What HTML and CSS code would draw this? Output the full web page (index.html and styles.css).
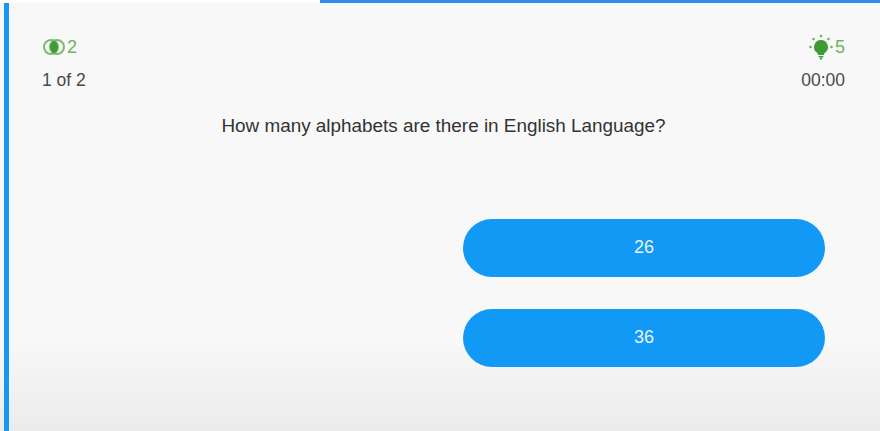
FILE: index.html
```html
<!DOCTYPE html>
<html>
  <head>
    <title>Quiz</title>
    <link rel="stylesheet" href="styles.css">
  </head>
  <body>
    <div class="progress"><div class="progress__bar"></div></div>
    <div class="quiz">
      <div class="stats">
        <div class="stats__col">
          <div class="stat">
            <svg class="stat__icon" width="24" height="16" viewBox="0 0 24 16">
              <circle cx="9" cy="8" r="7" fill="none" stroke="#7cbb6c" stroke-width="2"/>
              <circle cx="15" cy="8" r="7" fill="none" stroke="#7cbb6c" stroke-width="2"/>
              <path d="M12 1.700a7 7 0 0 1 0 12.600a7 7 0 0 1 0-12.600z" fill="#3f9c35"/>
            </svg>
            <span>2</span>
          </div>
          <div class="stats__text">1 of 2</div>
        </div>
        <div class="stats__col stats__col--right">
          <div class="stat">
            <svg class="stat__icon stat__icon--bulb" width="24" height="26" viewBox="0 0 24 26">
              <path d="M12 6a7 7 0 0 1 4.300 12.500c-.8.700-1.300 1.300-1.400 2.500H9.100c-.1-1.200-.6-1.800-1.400-2.500A7 7 0 0 1 12 6z" fill="#3f9c35"/>
              <path d="M9.500 22h5l-.5 1.500h-4zM10.500 24h3l-.8 1.500h-1.400z" fill="#3f9c35"/>
              <g fill="#6fb35f">
                <circle cx="12" cy="2" r="1.300"/>
                <circle cx="4.500" cy="5" r="1.300"/>
                <circle cx="19.500" cy="5" r="1.300"/>
                <circle cx="1.500" cy="13" r="1.300"/>
                <circle cx="22.500" cy="13" r="1.300"/>
              </g>
            </svg>
            <span>5</span>
          </div>
          <div class="stats__text">00:00</div>
        </div>
      </div>
      <p class="question">How many alphabets are there in English Language?</p>
      <div class="answers">
        <button class="answer">26</button>
        <button class="answer">36</button>
      </div>
    </div>
  </body>
</html>
```

FILE: styles.css
```css
/* Page */
html,
body {
  height: 100%;
}

body {
  margin: 0;
  overflow: hidden;
  display: flex;
  flex-direction: column;
  font-family: "Liberation Sans", Arial, sans-serif;
  background: linear-gradient(#f8f8f8 0, #f8f8f8 340px, #ebebeb 431px);
}

/* Top progress */
.progress {
  height: 3px;
  flex-shrink: 0;
  display: flex;
  justify-content: flex-end;
  background-color: #ffffff;
}

.progress__bar {
  width: 560px;
  background-color: #2f8fe8;
}

/* Card */
.quiz {
  height: 419px;
  margin-left: 4px;
  padding: 32px 35px 0 33px;
  border-left: 5px solid #1797ef;
}

.stats {
  display: flex;
  justify-content: space-between;
  color: #4a4a4a;
}

.stats__col {
  display: flex;
  flex-direction: column;
  gap: 11px;
}

.stats__col--right {
  align-items: flex-end;
}

.stat {
  height: 24px;
  display: flex;
  align-items: center;
  gap: 1px;
  font-size: 18px;
  color: #6fb35f;
}

.stat__icon--bulb {
  margin-right: 1px;
}

.stats__text {
  font-size: 17.5px;
  line-height: 20px;
}

/* Question */
.question {
  margin: 25px 0 0;
  font-size: 18.9px;
  line-height: 22px;
  text-align: center;
  color: #333333;
}

/* Answers */
.answers {
  width: 362px;
  margin: 82px 0 0 421px;
  display: flex;
  flex-direction: column;
  gap: 32px;
}

.answer {
  height: 58px;
  padding: 0 0 2px;
  border: none;
  border-radius: 29px;
  background-color: #1298f5;
  color: #e8f4fd;
  font-family: inherit;
  font-size: 18px;
  cursor: pointer;
}
```
